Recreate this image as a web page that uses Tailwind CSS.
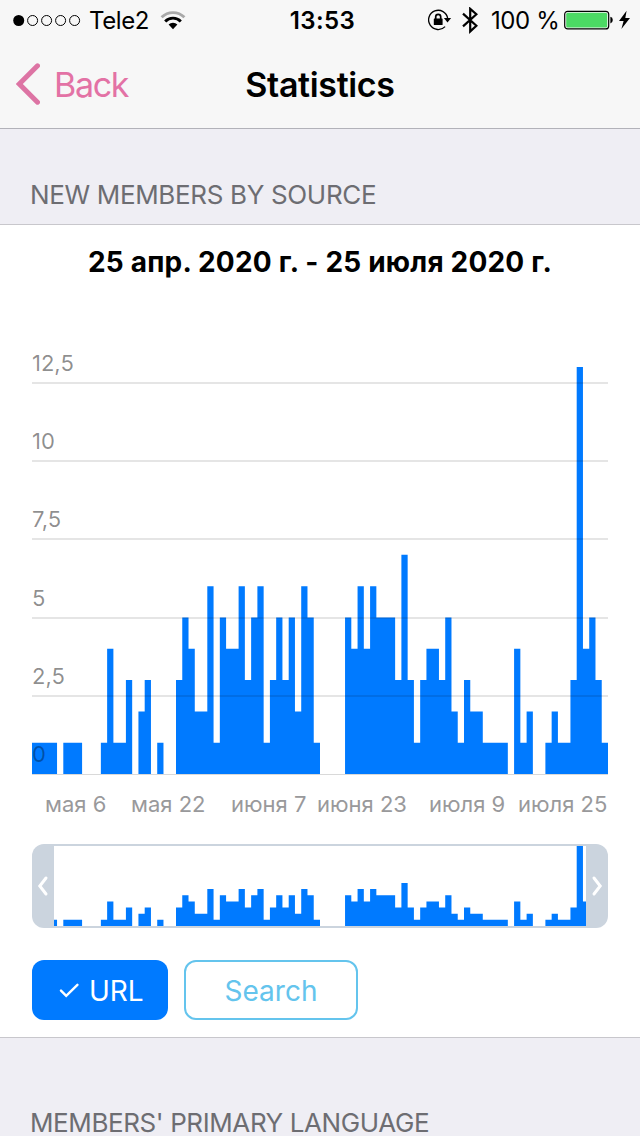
<!DOCTYPE html>
<html lang="en">
<head>
    <meta charset="UTF-8">
    <meta name="viewport" content="width=device-width, initial-scale=1.0">
    <title>Statistics</title>
    <script src="https://cdn.jsdelivr.net/npm/@tailwindcss/browser@4"></script>
</head>
<body class="w-[640px] h-[1136px] overflow-hidden bg-[#efeef4] text-black font-['Inter','Noto_Sans',sans-serif]">
    <!-- Status bar and navigation -->
    <header class="h-[129px] bg-[#f7f7f7] border-b border-[#b2b2b9]">
        <div class="h-10 grid grid-cols-[1fr_auto_1fr] items-center pl-[13px] pr-2 text-2xl leading-[38px]">
            <div class="flex items-center">
                <svg class="w-[69px] h-3" viewBox="0 0 69 12" fill="none" stroke="#000" stroke-width="1">
                    <circle cx="5.7" cy="6.5" r="5.5" fill="#000" stroke="none"/>
                    <circle cx="19.6" cy="6.5" r="5"/>
                    <circle cx="33.6" cy="6.5" r="5"/>
                    <circle cx="47.6" cy="6.5" r="5"/>
                    <circle cx="61.6" cy="6.5" r="5"/>
                </svg>
                <span class="ml-[7px] w-[60px] pt-[2px] tracking-[-0.4px] whitespace-nowrap">Tele2</span>
                <svg class="ml-[11px] w-[26px] h-[19px]" viewBox="0 0 26 19" fill="none" stroke-width="2.9">
                    <path d="M1.6 6.3A16.2 16.2 0 0 1 24.4 6.3" stroke="#a9a9a9"/>
                    <path d="M5.2 10.5A10.8 10.8 0 0 1 20.8 10.5" stroke="#000"/>
                    <path d="M13 18.2L8.6 13.6A6.2 6.2 0 0 1 17.4 13.6Z" fill="#000"/>
                </svg>
            </div>
            <span class="pt-[2px] font-semibold tracking-[0.4px]">13:53</span>
            <div class="flex items-center justify-end">
                <svg class="w-[24px] h-[22px]" viewBox="0 0 24 22" fill="none" stroke="#000">
                    <path d="M17.1 17.6A9.6 9.6 0 1 1 19.7 9.5" stroke-width="1.3"/>
                    <path d="M15.9 9h7.2l-3.6 4.6z" fill="#000" stroke="none"/>
                    <rect x="5.8" y="9.4" width="8.8" height="6.6" rx=".6" fill="#000" stroke="none"/>
                    <path d="M7.7 10V7.8a2.5 2.5 0 0 1 5 0V10" stroke-width="1.7"/>
                </svg>
                <svg class="ml-[10px] mr-px w-4 h-[27px]" viewBox="0 0 16 27" fill="none" stroke="#000" stroke-width="2.2">
                    <path d="M1 6.6L14.4 18.8L8.2 24.4V1.8L14.4 7.2L1 19.4"/>
                </svg>
                <span class="ml-[12px] w-[68px] pt-[2px] tracking-[-0.4px] whitespace-nowrap">100 %</span>
                <svg class="ml-[5px] w-[50px] h-5" viewBox="0 0 50 20">
                    <rect x=".7" y="1.3" width="44" height="17.6" rx="3" fill="none" stroke="#000" stroke-width="1.2"/>
                    <rect x="2.2" y="2.8" width="41" height="14.6" rx="1.5" fill="#4cd964"/>
                    <path d="M46.4 6.8q2.4.4 2.4 3.3t-2.4 3.3z"/>
                </svg>
                <svg class="ml-[4px] w-[14px] h-5" viewBox="0 0 14 20">
                    <path d="M8.6 .7L1 11H5.6L3.4 19L12 8H7.3Z"/>
                </svg>
            </div>
        </div>
        <div class="h-[88px] grid grid-cols-[1fr_auto_1fr] items-center px-4">
            <a class="flex items-center text-[#e372a5]">
                <svg class="w-6 h-[42px]" viewBox="0 0 24 42" fill="none" stroke="#dd74a4" stroke-width="5" stroke-linecap="round" stroke-linejoin="miter">
                    <path d="M21.5 2.8L3.3 21L21.5 39.2"/>
                </svg>
                <span class="ml-[14px] text-[34px] tracking-[-1.3px]">Back</span>
            </a>
            <h1 class="text-[34px] font-semibold tracking-[-0.35px] whitespace-nowrap">Statistics</h1>
        </div>
    </header>

    <h2 class="h-[95px] pt-[46px] pl-[30px] text-[26px] leading-10 tracking-[-0.34px] text-[#6d6d72] whitespace-nowrap">NEW MEMBERS BY SOURCE</h2>

    <!-- Chart card -->
    <main class="h-[814px] border-y border-[#c8c7cc] bg-white px-8">
        <h3 class="h-[80px] pt-[17px] text-center text-[28px] leading-10 font-bold tracking-[0.2px] whitespace-nowrap">25 апр. 2020 г. - 25 июля 2020 г.</h3>

        <div class="relative text-[22px] text-black/45">
            <svg id="chart" class="absolute bottom-[1px] left-0 w-[576px] h-[407px]" viewBox="0 0 576 407" fill="#007aff"></svg>
            <div class="relative flex flex-col leading-[30px]">
                <div class="h-[79px] flex items-end pb-1 border-b-2 border-black/10">12,5</div>
                <div class="h-[78px] flex items-end pb-1 border-b-2 border-black/10">10</div>
                <div class="h-[78px] flex items-end pb-1 border-b-2 border-black/10">7,5</div>
                <div class="h-[79px] flex items-end pb-1 border-b-2 border-black/10">5</div>
                <div class="h-[78px] flex items-end pb-1 border-b-2 border-black/10">2,5</div>
                <div class="h-[77px] flex items-end pb-[5px] text-black/35">0</div>
            </div>
            <div class="h-px bg-black/15"></div>
        </div>

        <div class="h-[69px] pt-[14px] pl-[13px] grid grid-cols-[86px_100px_86px_112px_89px_90px] text-[22px] leading-[30px] text-[#99999b] whitespace-nowrap">
            <span>мая 6</span>
            <span>мая 22</span>
            <span>июня 7</span>
            <span>июня 23</span>
            <span>июля 9</span>
            <span>июля 25</span>
        </div>

        <!-- Range selector -->
        <div class="flex h-[84px] rounded-xl overflow-hidden bg-[#cbd4de]">
            <svg class="w-[22px] h-[84px]" viewBox="0 0 22 84" fill="none" stroke="#fff" stroke-width="3" stroke-linecap="round">
                <path d="M14 34L7.8 42L14 50"/>
            </svg>
            <svg id="preview" class="w-[532px] h-20 my-[2px] bg-white" viewBox="22 0 532 80" fill="#007aff"></svg>
            <svg class="w-[22px] h-[84px]" viewBox="0 0 22 84" fill="none" stroke="#fff" stroke-width="3" stroke-linecap="round">
                <path d="M8 34L14.2 42L8 50"/>
            </svg>
        </div>

        <div class="mt-8 flex gap-4 text-[28px]">
            <button class="w-[136px] h-[60px] rounded-xl bg-[#007aff] text-white flex items-center pl-[27px]">
                <svg class="w-5 h-[15px]" viewBox="0 0 20 15" fill="none" stroke="#fff" stroke-width="2.4" stroke-linecap="round">
                    <path d="M2 7.6L7.2 12.8L18.4 1.8"/>
                </svg>
                <span class="ml-[10px] pt-[2px]">URL</span>
            </button>
            <button class="w-[174px] h-[60px] pt-[2px] rounded-xl border-2 border-[#64c4ed] text-[#64c4ed]">Search</button>
        </div>
    </main>

    <h2 class="pt-[65px] pl-[30px] text-[26px] leading-10 tracking-[-0.4px] text-[#6d6d72] whitespace-nowrap">MEMBERS' PRIMARY LANGUAGE</h2>

    <script>
        // New members per day, 25 April to 25 July
        const members = [
            1, 1, 1, 1, 0, 1, 1, 1, 0, 0, 0, 1, 4, 1, 1, 3, 0, 2, 3, 0, 1, 0, 0,
            3, 5, 4, 2, 2, 6, 1, 5, 4, 4, 6, 3, 5, 6, 1, 3, 5, 3, 5, 2, 6, 5, 1,
            0, 0, 0, 0, 5, 4, 6, 4, 6, 5, 5, 5, 3, 7, 3, 1, 3, 4, 4, 3, 5, 2, 1,
            3, 2, 2, 1, 1, 1, 1, 0, 4, 1, 2, 0, 0, 1, 2, 1, 1, 3, 13, 4, 5, 3, 1
        ];

        function drawBars(id, height) {
            const step = 576 / members.length;
            const unit = height / 13;
            let d = `M0 ${height}`;
            members.forEach((n, i) => {
                d += `V${height - n * unit}H${(i + 1) * step}`;
            });
            const path = document.createElementNS('http://www.w3.org/2000/svg', 'path');
            path.setAttribute('d', d + `V${height}Z`);
            document.getElementById(id).appendChild(path);
        }

        drawBars('chart', 407);
        drawBars('preview', 80);
    </script>
</body>
</html>
